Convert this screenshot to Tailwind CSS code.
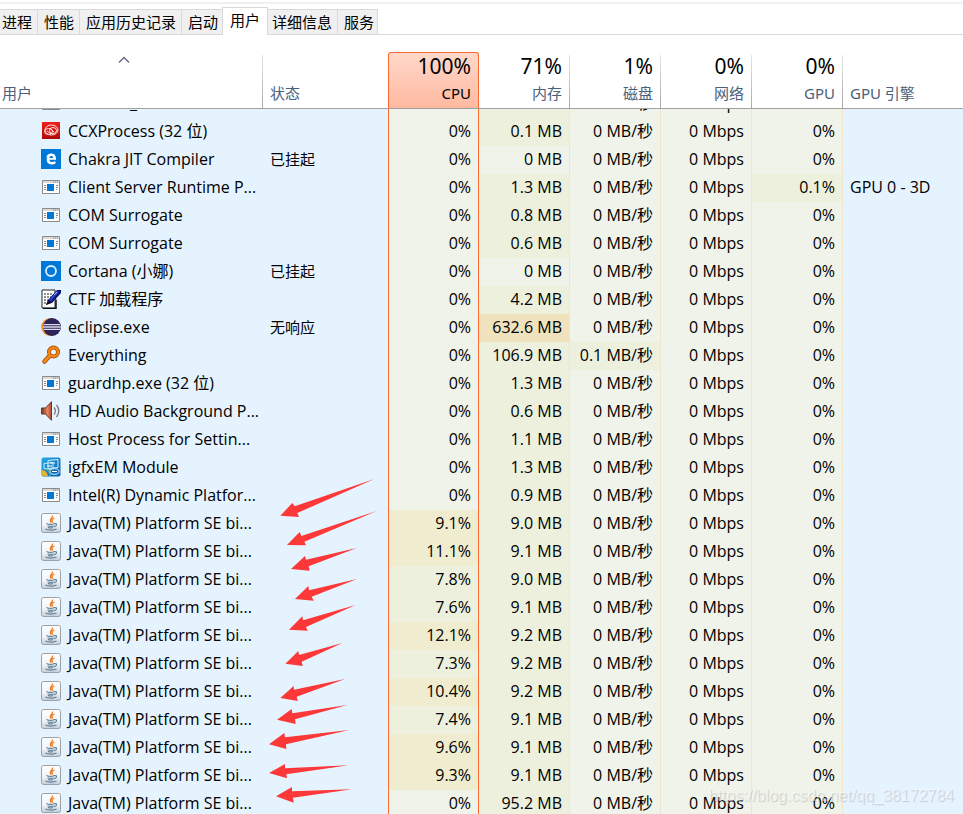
<!DOCTYPE html>
<html lang="zh-CN">
<head>
<meta charset="utf-8">
<title>任务管理器</title>
<script src="https://cdn.jsdelivr.net/npm/@tailwindcss/browser@4"></script>
</head>
<body class="bg-white font-['Noto_Sans','Noto_Sans_CJK_SC',sans-serif] text-[15px] text-black">
<svg class="absolute h-0 w-0" aria-hidden="true">
  <defs>
    <linearGradient id="gRed" x2="0" y2="1"><stop stop-color="#f0201c"/><stop offset="1" stop-color="#b00808"/></linearGradient>
    <linearGradient id="gJava" x2="0" y2="1"><stop stop-color="#ffffff"/><stop offset=".6" stop-color="#f1f4f6"/><stop offset="1" stop-color="#c3ccd6"/></linearGradient>
    <linearGradient id="gBlue" x2="1" y2="1"><stop stop-color="#27a9e6"/><stop offset="1" stop-color="#0560b0"/></linearGradient>
    <linearGradient id="gCone" x2="1" y2="0"><stop stop-color="#7c3424"/><stop offset=".6" stop-color="#e88463"/><stop offset="1" stop-color="#a84830"/></linearGradient>
    <symbol id="app" viewBox="0 0 20 20">
      <path d="M1.500 3.500h17v13h-17z" fill="#fff" stroke="#8a8a8a"/><path d="M2 4h16v2H2z" fill="#dcdcdc"/>
      <path d="M12 5h1m1 0h1m1 0h1" stroke="#777"/>
      <path d="M3 8.500h2m-2 2h2m-2 2h2M15 8.500h2m-2 2h2m-2 2h1" stroke="#8a8a8a"/><path d="M6 7h7v7H6z" fill="#0078d7"/>
    </symbol>
    <symbol id="cc" viewBox="0 0 20 20">
      <path d="M1 1h18v17H1z" fill="url(#gRed)"/>
      <g fill="none" stroke="#ffe3df"><ellipse cx="10.500" cy="9" rx="6.500" ry="5"/><ellipse cx="7.500" cy="10.500" rx="4" ry="3"/><ellipse cx="12" cy="9.500" rx="3.500" ry="3"/><path d="M6 10l4 3M9 7l4 4" /></g>
    </symbol>
    <symbol id="edge" viewBox="0 0 20 20">
      <path d="M0 0h20v20H0z" fill="#0078d7"/>
      <path d="M5.200 9.300C5.800 6 7.600 4.600 10.100 4.600c3 0 4.900 2 4.900 4.900v1.300H8.300c.1 1.600 1.300 2.300 3 2.300 1.200 0 2.300-.3 3.200-.8v2.200c-1 .6-2.300.9-3.800.9-3.100 0-5-1.700-5-4.400 0-2 1-3.400 2.800-4.100-1.400.4-2.500 1.200-3.300 2.400zM8.300 9h3.900c0-1.400-.7-2-1.800-2-1.200 0-2 .8-2.100 2z" fill="#fff"/>
    </symbol>
    <symbol id="cortana" viewBox="0 0 20 20">
      <path d="M0 0h20v20H0z" fill="#0078d7"/><circle cx="10" cy="10" r="5" fill="none" stroke="#d8f0ff" stroke-width="1.800"/>
    </symbol>
    <symbol id="ctf" viewBox="0 0 20 20">
      <path d="M1 1h13v18H1z" fill="#fff" stroke="#222"/><path d="M2 19.500h13v-9" fill="none" stroke="#111" stroke-width="1.500"/>
      <path d="M3 5h8M3 8h7M3 11h5M3 14h3" stroke="#222" stroke-dasharray="2 1"/>
      <path d="M5 16l2-5 9-10h4v3l-9 10z" fill="#101068"/><path d="M8 11l8-9 2 1-8 9z" fill="#2647d8"/><path d="M5 16l2-4 2 2z" fill="#111"/><path d="M13 6l3-3" stroke="#9db8ff"/>
    </symbol>
    <symbol id="eclipse" viewBox="0 0 20 20">
      <circle cx="9" cy="10" r="9" fill="#f29b3c"/><circle cx="11" cy="10" r="9" fill="#2d2358"/>
      <path d="M2.500 7.700h16.600M2 10h17.800M2.500 12.300h16.600" stroke="#dcd9ea" stroke-width="1.300"/>
    </symbol>
    <symbol id="search" viewBox="0 0 20 20">
      <g fill="none" stroke-linecap="round"><path d="M8 11.500L3.500 16.500" stroke="#a54b08" stroke-width="4.500"/><circle cx="12.500" cy="7" r="4.500" stroke="#a54b08" stroke-width="4"/><circle cx="12.500" cy="7" r="4.500" stroke="#f78614" stroke-width="2.400"/><path d="M8.500 11L3.500 16.500" stroke="#f78614" stroke-width="2.800"/></g>
    </symbol>
    <symbol id="audio" viewBox="0 0 20 20">
      <path d="M.5 7h4L10.500.7v18.600L4.500 13h-4z" fill="url(#gCone)" stroke="#6b3528"/>
      <path d="M13 6.500c1.600 2 1.600 5 0 7M15.500 4c3 3.500 3 8.500 0 12" fill="none" stroke="#777" stroke-width="1.300"/>
    </symbol>
    <symbol id="igfx" viewBox="0 0 20 20">
      <rect x=".5" y=".5" width="19" height="19" rx="2" fill="url(#gBlue)"/>
      <path d="M1 13c3 0 5 2 6 6H2l-1-1z" fill="#e8b22a"/><path d="M2 11c4 0 7 4 7 8" stroke="#7fc241" fill="none"/>
      <path d="M7 3.500l10-1v8l-10 1zM3 6.500l9-1v7l-9-1z" fill="none" stroke="#c9efff"/><path d="M9 6h5M6 9h5" stroke="#fff"/>
      <ellipse cx="13.500" cy="14.500" rx="4.500" ry="2.800" fill="#0b6bb8" stroke="#e8f8ff"/><path d="M11 14.500h5" stroke="#fff"/>
    </symbol>
    <symbol id="java" viewBox="0 0 20 20">
      <rect x=".5" y=".5" width="19" height="19" rx="2" fill="url(#gJava)" stroke="#98a2ad"/>
      <path d="M11.500 2.500c1 2.500-4 3.500-1.500 7M13.500 5c-3 1.300-2.800 2.200-2 4.800" fill="none" stroke="#ec7a24" stroke-width="1.300"/>
      <path d="M5.500 10.500c2 .9 6 .9 8 0M6.500 12.700c2 .7 4.500.7 6.200 0M7 14.500c1.600.6 3.600.6 5.200 0M13.500 10.700c3-.6 2.500 2.600-.5 3M4.500 16c2.500 1.400 8.500 1.400 11 0" fill="none" stroke="#5e7f9b" stroke-width="1.200"/>
    </symbol>
  </defs>
</svg>

<div class="relative flex h-screen flex-col overflow-hidden">
  <div class="mt-[2px] h-[2px] shrink-0 bg-[#f0f0f0]"></div>
  <nav class="flex h-[31px] shrink-0 items-end border-b border-[#d9d9d9] leading-[24px]" role="tablist" aria-label="视图">
    <button role="tab" class="-mb-px h-[26px] border-y border-r border-[#d9d9d9] bg-[#f0f0f0] pr-[5px] pl-[2px]">进程</button>
    <button role="tab" class="-mb-px h-[26px] border-y border-r border-[#d9d9d9] bg-[#f0f0f0] pr-[5px] pl-[6px]">性能</button>
    <button role="tab" class="-mb-px h-[26px] border-y border-r border-[#d9d9d9] bg-[#f0f0f0] pr-[5px] pl-[6px]">应用历史记录</button>
    <button role="tab" class="-mb-px h-[26px] border-y border-r border-[#d9d9d9] bg-[#f0f0f0] pr-[5px] pl-[6px]">启动</button>
    <button role="tab" aria-selected="true" class="z-10 -mx-[2px] -mb-px h-[28px] border-x border-t border-[#d9d9d9] bg-white px-[7px] pb-[4px]">用户</button>
    <button role="tab" class="-mb-px h-[26px] border-y border-r border-[#d9d9d9] bg-[#f0f0f0] pr-[5px] pl-[6px]">详细信息</button>
    <button role="tab" class="-mb-px h-[26px] border-y border-r border-[#d9d9d9] bg-[#f0f0f0] pr-[3px] pl-[6px]">服务</button>
  </nav>

  <div class="relative min-h-0 flex-1 overflow-hidden bg-[#e5f3ff]">
    <table class="w-full table-fixed border-separate border-spacing-0">
      <colgroup><col class="w-[263px]"><col class="w-[125px]"><col class="w-[91px]"><col class="w-[91px]"><col class="w-[91px]"><col class="w-[91px]"><col class="w-[91px]"><col></colgroup>
      <thead>
        <tr id="head" class="h-[74px]"></tr>
      </thead>
      <tbody id="rows"></tbody>
    </table>
    <svg class="absolute top-[435px] left-[260px] h-[344px] w-[130px]" viewBox="0 0 390 1032" fill="#fd3838" aria-hidden="true">
      <path d="M61 137L97 99 104 109 343 27 112 129 117 141z"/>
      <path d="M81 225L119 186 124 198 350 123 133 215 138 226z"/>
      <path d="M93 297L135 258 138 269 290 234 146 289 149 302z"/>
      <path d="M105 387L145 348 147 361 291 327 155 380 161 392z"/>
      <path d="M87 479L127 439 129 451 287 405 138 471 143 482z"/>
      <path d="M76 581L115 543 117 555 247 519 125 575 128 588z"/>
      <path d="M61 684L101 648 102 659 255 627 110 680 113 693z"/>
      <path d="M51 749L95 717 97 730 262 705 105 748 107 762z"/>
      <path d="M27 823L73 789 75 802 268 780 78 823 79 837z"/>
      <path d="M27 909L75 882 75 895 266 886 79 913 81 925z"/>
      <path d="M48 979L96 951 96 964 276 958 99 983 101 998z"/>
    </svg>
  </div>
  <div class="absolute right-[9px] bottom-[8px] font-['Liberation_Sans',sans-serif] text-[16px] leading-[20px] text-white/50 [text-shadow:1px_1px_1px_rgb(0_0_0/0.16)]">https://blog.csdn.net/qq_38172784</div>
</div>

<script>
const line = '<span class="absolute right-0 bottom-0 h-[53px] w-px bg-linear-to-b from-[#e6e6e6] to-[#a8a8a8]"></span>';
const th = 'relative border-b border-[#a0a0a0] bg-white p-0 align-bottom font-normal text-[#4c607a]';
const stat = (pct, label) => `<th scope="col" class="${th}"><div class="pr-[8px] text-right"><div class="text-[21px] leading-[28px] text-black">${pct}</div><div class="pb-[2px] leading-[26px]">${label}</div></div>${line}</th>`;
document.getElementById('head').innerHTML =
  `<th scope="col" aria-sort="ascending" class="${th} text-left"><svg class="mx-auto h-[8px] w-[12px] translate-x-[-8px]" viewBox="0 0 12 8" fill="none" stroke="#6a6a8a" stroke-width="1.500" aria-hidden="true"><path d="M1 6.500L6 1.500 11 6.500"/></svg><div class="pt-[16px] pb-[2px] pl-[2px] leading-[26px]">用户</div>${line}</th>` +
  `<th scope="col" class="${th} text-left"><div class="pb-[2px] pl-[7px] leading-[26px]">状态</div></th>` +
  `<th scope="col" class="border-b border-[#a0a0a0] bg-white p-0 align-bottom font-normal"><div class="h-[56px] rounded-t-[3px] border-x border-t border-[#ff6a33] bg-linear-to-b from-[#ffd8ca] to-[#ffb9a0] pr-[7px] text-right"><div class="text-[21px] leading-[26px]">100%</div><div class="leading-[28px]">CPU</div></div></th>` +
  stat('71%', '内存') + stat('1%', '磁盘') + stat('0%', '网络') + stat('0%', 'GPU') +
  `<th scope="col" class="${th} text-left"><div class="pb-[2px] pl-[7px] leading-[26px]">GPU 引擎</div></th>`;

const J = 'Java(TM) Platform SE bi...';
const data = [
  ['app', 'Browser_B...', '', '0%', '0.1 MB'],
  ['cc', 'CCXProcess (32 位)', '', '0%', '0.1 MB'],
  ['edge', 'Chakra JIT Compiler', '已挂起', '0%', '0 MB'],
  ['app', 'Client Server Runtime P...', '', '0%', '1.3 MB', '0', '0.1%', 'GPU 0 - 3D'],
  ['app', 'COM Surrogate', '', '0%', '0.8 MB'],
  ['app', 'COM Surrogate', '', '0%', '0.6 MB'],
  ['cortana', 'Cortana (小娜)', '已挂起', '0%', '0 MB'],
  ['ctf', 'CTF 加载程序', '', '0%', '4.2 MB'],
  ['eclipse', 'eclipse.exe', '无响应', '0%', '632.6 MB'],
  ['search', 'Everything', '', '0%', '106.9 MB', '0.1'],
  ['app', 'guardhp.exe (32 位)', '', '0%', '1.3 MB'],
  ['audio', 'HD Audio Background P...', '', '0%', '0.6 MB'],
  ['app', 'Host Process for Settin...', '', '0%', '1.1 MB'],
  ['igfx', 'igfxEM Module', '', '0%', '1.3 MB'],
  ['app', 'Intel(R) Dynamic Platfor...', '', '0%', '0.9 MB'],
  ['java', J, '', '9.1%', '9.0 MB'],
  ['java', J, '', '11.1%', '9.1 MB'],
  ['java', J, '', '7.8%', '9.0 MB'],
  ['java', J, '', '7.6%', '9.1 MB'],
  ['java', J, '', '12.1%', '9.2 MB'],
  ['java', J, '', '7.3%', '9.2 MB'],
  ['java', J, '', '10.4%', '9.2 MB'],
  ['java', J, '', '7.4%', '9.1 MB'],
  ['java', J, '', '9.6%', '9.1 MB'],
  ['java', J, '', '9.3%', '9.1 MB'],
  ['java', J, '', '0%', '95.2 MB'],
];
const heat = ['bg-[#eff3e9]', 'bg-[#ecf0dc]', 'bg-[#f0eccf]', 'bg-[#f0e2bc]'];
const level = (v, mid, high) => v === 0 ? 0 : v < mid ? 1 : v < high ? 2 : 3;
const latin = "font-['Open_Sans','Noto_Sans_CJK_SC',sans-serif] text-[16px]";
document.getElementById('rows').innerHTML = data.map(([icon, name, status, cpu, mem, disk = '0', gpu = '0%', engine = ''], i) => {
  // The first row is scrolled mostly under the header.
  const box = i ? 'flex h-[28px] items-end overflow-hidden' : 'flex h-[9px] items-end overflow-hidden';
  const cell = (html, td, inner) => `<td class="p-0 ${td}"><div class="${box} ${inner}"><div class="flex h-[28px] shrink-0 items-center pb-[2px] whitespace-nowrap">${html}</div></div></td>`;
  const num = (text, lv) => cell(text, 'border-r border-[#f0e4cc] ' + heat[lv], 'justify-end pr-[7px] ' + latin);
  return '<tr>' +
    cell(`<svg class="mr-[7px] h-[20px] w-[20px]" aria-hidden="true"><use href="#${icon}"/></svg>${name}`, '', 'pl-[41px] ' + latin) +
    cell(status, '', 'pl-[7px]') +
    cell(cpu, 'border-x border-[#ff6a33] ' + heat[level(parseFloat(cpu), 9, 50)], 'justify-end pr-[7px] ' + latin) +
    num(mem, level(parseFloat(mem), 300, 600)) +
    num(disk + ' MB/秒', level(parseFloat(disk), 10, 50)) +
    num('0 Mbps', 0) +
    num(gpu, level(parseFloat(gpu), 10, 50)) +
    cell(engine, '', 'pl-[7px] ' + latin) + '</tr>';
}).join('');
</script>
</body>
</html>
